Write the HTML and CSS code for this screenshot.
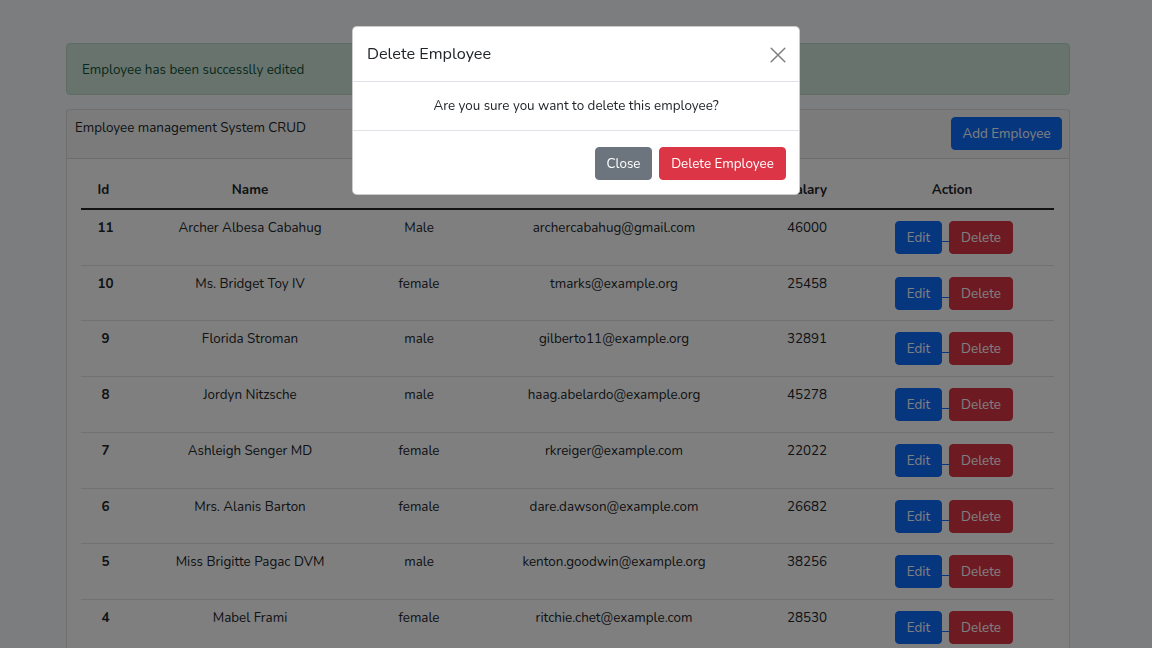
FILE: index.html
```html
<!DOCTYPE html>
<html lang="en">
<head>
<meta charset="utf-8">
<title>Employee management System CRUD</title>
<link rel="stylesheet" href="styles.css">
</head>
<body>
<main class="page">
  <div class="alert">Employee has been successlly edited</div>
  <section class="card">
    <header class="card-header">
      <span class="card-title">Employee management System CRUD</span>
      <button class="btn btn-primary btn-add">Add Employee</button>
    </header>
    <div class="card-body">
      <table class="table">
        <colgroup>
          <col class="c-id"><col class="c-name"><col class="c-gender"><col class="c-email"><col class="c-salary"><col class="c-action">
        </colgroup>
        <thead>
          <tr><th>Id</th><th>Name</th><th>Gender</th><th>Email</th><th>Salary</th><th>Action</th></tr>
        </thead>
        <tbody>
          <tr><th>11</th><td>Archer Albesa Cabahug</td><td>Male</td><td>archercabahug@gmail.com</td><td>46000</td><td><div class="actions"><button class="btn btn-primary">Edit</button><span class="link-gap"></span><button class="btn btn-danger">Delete</button></div></td></tr>
          <tr><th>10</th><td>Ms. Bridget Toy IV</td><td>female</td><td>tmarks@example.org</td><td>25458</td><td><div class="actions"><button class="btn btn-primary">Edit</button><span class="link-gap"></span><button class="btn btn-danger">Delete</button></div></td></tr>
          <tr><th>9</th><td>Florida Stroman</td><td>male</td><td>gilberto11@example.org</td><td>32891</td><td><div class="actions"><button class="btn btn-primary">Edit</button><span class="link-gap"></span><button class="btn btn-danger">Delete</button></div></td></tr>
          <tr><th>8</th><td>Jordyn Nitzsche</td><td>male</td><td>haag.abelardo@example.org</td><td>45278</td><td><div class="actions"><button class="btn btn-primary">Edit</button><span class="link-gap"></span><button class="btn btn-danger">Delete</button></div></td></tr>
          <tr><th>7</th><td>Ashleigh Senger MD</td><td>female</td><td>rkreiger@example.com</td><td>22022</td><td><div class="actions"><button class="btn btn-primary">Edit</button><span class="link-gap"></span><button class="btn btn-danger">Delete</button></div></td></tr>
          <tr><th>6</th><td>Mrs. Alanis Barton</td><td>female</td><td>dare.dawson@example.com</td><td>26682</td><td><div class="actions"><button class="btn btn-primary">Edit</button><span class="link-gap"></span><button class="btn btn-danger">Delete</button></div></td></tr>
          <tr><th>5</th><td>Miss Brigitte Pagac DVM</td><td>male</td><td>kenton.goodwin@example.org</td><td>38256</td><td><div class="actions"><button class="btn btn-primary">Edit</button><span class="link-gap"></span><button class="btn btn-danger">Delete</button></div></td></tr>
          <tr><th>4</th><td>Mabel Frami</td><td>female</td><td>ritchie.chet@example.com</td><td>28530</td><td><div class="actions"><button class="btn btn-primary">Edit</button><span class="link-gap"></span><button class="btn btn-danger">Delete</button></div></td></tr>
        </tbody>
      </table>
    </div>
  </section>
</main>

<div class="backdrop"></div>
<div class="modal" role="dialog">
  <div class="modal-header">
    <h5 class="modal-title">Delete Employee</h5>
    <button class="btn-close" aria-label="Close">
      <svg width="16" height="16" viewBox="0 0 16 16"><path d="M1.2 1.2 L14.8 14.8 M14.8 1.2 L1.2 14.8" stroke="#000" stroke-width="1.5" stroke-linecap="round"/></svg>
    </button>
  </div>
  <div class="modal-body">Are you sure you want to delete this employee?</div>
  <div class="modal-footer">
    <button class="btn btn-secondary">Close</button>
    <button class="btn btn-danger btn-del-emp">Delete Employee</button>
  </div>
</div>
</body>
</html>
```

FILE: styles.css
```css
* { box-sizing: border-box; }
html, body { margin: 0; padding: 0; }
body {
  background: #f8fafc;
  color: #212529;
  font-family: "Nunito", Lato, "Noto Sans", sans-serif;
  font-size: 13.4px;
  line-height: 23px;
  overflow: hidden;
  height: 648px;
}
.page {
  width: 1004px;
  margin-left: 66px;
  padding-top: 43px;
}
.alert {
  background: #d1e7dd;
  border: 1px solid #badbcc;
  color: #0f5132;
  border-radius: 4px;
  padding: 14px 15px;
  margin-bottom: 14px;
  height: 52px;
}
.card {
  background: #fff;
  border: 1px solid rgba(0,0,0,.125);
  border-radius: 4px;
}
.card-header {
  display: flex;
  justify-content: space-between;
  align-items: flex-start;
  padding: 6px 7px 8px 8px;
  background: rgba(0,0,0,.03);
  border-bottom: 1px solid rgba(0,0,0,.125);
  height: 49px;
}
.card-header .btn-add { margin-top: 1px; }
.card-body { padding: 14px 14px 20px 14px; }
.btn {
  font-family: inherit;
  font-size: 13.4px;
  line-height: 31px;
  height: 33px;
  padding: 0 12px;
  border: 1px solid transparent;
  border-radius: 4px;
  color: #fff;
  cursor: pointer;
}
.btn-primary { background: #0d6efd; border-color: #0d6efd; }
.btn-danger { background: #dc3545; border-color: #dc3545; }
.btn-secondary { background: #6c757d; border-color: #6c757d; }
.btn-add { width: 111px; padding: 0; }
.table {
  width: 973px;
  border-collapse: collapse;
  table-layout: fixed;
}
.c-id { width: 45px; }
.c-name { width: 248px; }
.c-gender { width: 90px; }
.c-email { width: 300px; }
.c-salary { width: 86px; }
.c-action { width: 204px; }
.table th, .table td {
  text-align: center;
  vertical-align: top;
  padding: 6px 8px;
}
.table thead th {
  font-weight: 700;
  padding: 5px 8px 7px;
  border-bottom: 2px solid #212529;
}
.table tbody th, .table tbody td {
  padding: 6px 8px 25.71px;
  border-bottom: 1px solid #dee2e6;
}
.table tbody th { font-weight: 700; }
.table tbody th:first-child { padding-left: 10px; padding-right: 6px; }
.actions {
  display: flex;
  justify-content: center;
  align-items: flex-start;
  margin-top: 5px;
  height: 18px;
}
.actions .btn { flex: none; }
.actions .btn-primary { width: 47px; padding: 0; margin-left: 4px; }
.actions .btn-danger { width: 64px; padding: 0; }
.link-gap {
  width: 7px;
  height: 1px;
  margin-top: 20px;
  background: #0d6efd;
  flex: none;
}
.backdrop {
  position: fixed;
  inset: 0;
  background: rgba(0,0,0,.5);
}
.modal {
  position: fixed;
  top: 26px;
  left: 352px;
  width: 448px;
  background: #fff;
  border: 1px solid rgba(0,0,0,.2);
  border-radius: 5px;
}
.modal-header {
  display: flex;
  align-items: center;
  justify-content: space-between;
  padding: 0 13px 0 14px;
  height: 55px;
  border-bottom: 1px solid #dee2e6;
}
.modal-title {
  margin: 0;
  font-size: 16.2px;
  font-weight: 400;
  line-height: 21.6px;
  padding-top: 2px;
}
.btn-close {
  background: none;
  border: 0;
  padding: 0;
  width: 16px;
  height: 16px;
  opacity: .5;
  display: flex;
  margin-top: 2px;
}
.modal-body {
  text-align: center;
  padding: 12px 16px 13px;
  border-bottom: 1px solid #dee2e6;
}
.modal-footer {
  display: flex;
  justify-content: flex-end;
  gap: 7px;
  padding: 16px 13px 14px;
}
.modal-footer .btn { height: 33px; line-height: 31px; }
.modal-footer .btn-secondary { width: 57px; padding: 0; }
.btn-del-emp { width: 127px; padding: 0; }
```
